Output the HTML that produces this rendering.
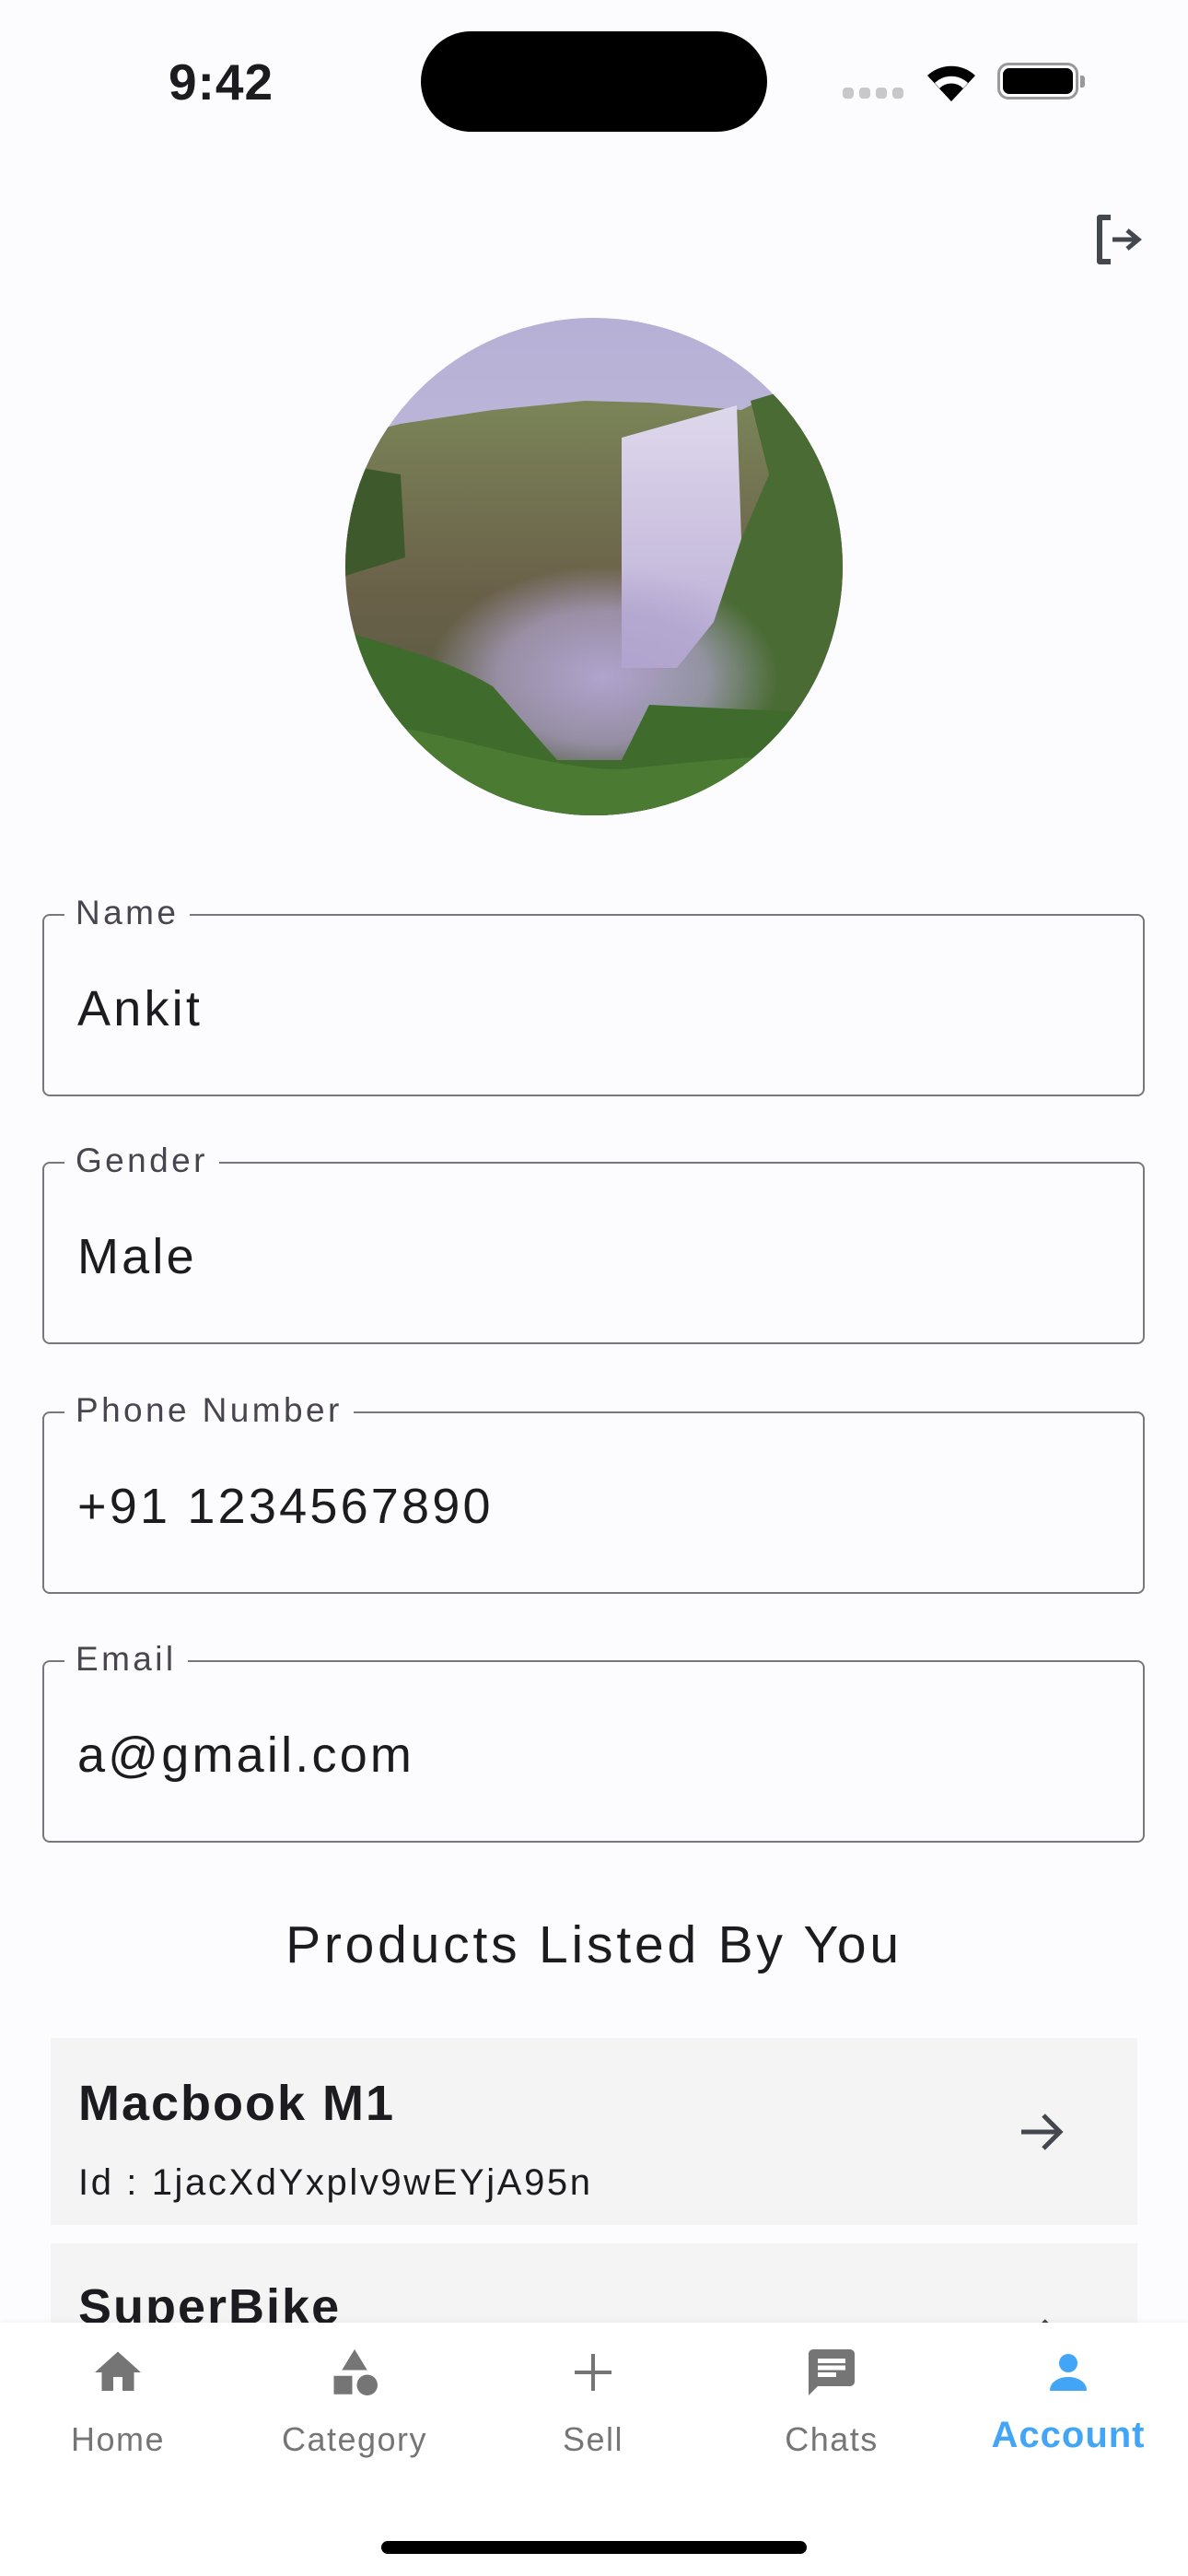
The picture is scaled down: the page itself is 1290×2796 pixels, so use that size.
<!DOCTYPE html>
<html><head><meta charset="utf-8"><style>
*{margin:0;padding:0;box-sizing:border-box}
body{width:1290px;height:2796px;background:#fcfcff;position:relative;overflow:hidden;font-family:"Liberation Sans",sans-serif;color:#1c1b1f}
.abs{position:absolute}
.field{position:absolute;left:46px;width:1197px;height:198px;border:2.5px solid #79767d;border-radius:8px}
.field .lab{position:absolute;left:22px;top:-25px;background:#fcfcff;padding:0 12px;font-size:37px;color:#49454f;letter-spacing:3.4px;line-height:44px}
.field .val{position:absolute;left:36px;top:70px;font-size:54px;letter-spacing:3.2px;line-height:62px}
.card{position:absolute;left:55px;width:1180px;background:#f4f4f4}
.card .t{position:absolute;left:30px;top:40px;font-size:54px;font-weight:bold;letter-spacing:2px}
.card .i{position:absolute;left:30px;top:135px;font-size:40px;letter-spacing:2.6px}
.nav{position:absolute;left:0;top:2521px;width:1290px;height:275px;background:#fff;box-shadow:0 -2px 6px rgba(0,0,0,.04)}
.ni{position:absolute;top:0;width:200px;height:200px}
.ni .l{position:absolute;left:0;top:106px;width:200px;text-align:center;font-size:36px;color:#757575;letter-spacing:1.5px}
.ni svg{position:absolute;top:24px;left:70px}
</style></head><body>
<div class="abs" style="left:183px;top:57px;font-size:55px;font-weight:bold;letter-spacing:1px">9:42</div>
<div class="abs" style="left:457px;top:34px;width:376px;height:109px;background:#000;border-radius:55px"></div>
<div class="abs" style="left:915px;top:95px;width:66px;height:12px">
<span class="abs" style="left:0;width:12px;height:12px;background:#c8c8c8;border-radius:4px"></span>
<span class="abs" style="left:18px;width:12px;height:12px;background:#c8c8c8;border-radius:4px"></span>
<span class="abs" style="left:36px;width:12px;height:12px;background:#c8c8c8;border-radius:4px"></span>
<span class="abs" style="left:54px;width:12px;height:12px;background:#c8c8c8;border-radius:4px"></span></div>
<svg class="abs" style="left:1003px;top:66px" width="60" height="44" viewBox="0 0 60 44"><path d="M30 44 L4 16 A38 38 0 0 1 56 16 Z" fill="#000"/><path d="M30 44 L12 24 A26 26 0 0 1 48 24Z" fill="#fcfcff"/><path d="M30 44 L17 30 A18 18 0 0 1 43 30Z" fill="#000"/></svg>
<div class="abs" style="left:1083px;top:68px;width:88px;height:40px;border:3px solid #999;border-radius:12px"></div>
<div class="abs" style="left:1089px;top:74px;width:76px;height:28px;background:#000;border-radius:7px"></div>
<div class="abs" style="left:1173px;top:82px;width:5px;height:13px;background:#999;border-radius:0 3px 3px 0"></div>
<svg class="abs" style="left:1186px;top:230px" width="60" height="60" viewBox="0 0 60 60"><path d="M20 6 H8 V54 H20" fill="none" stroke="#44474e" stroke-width="6" stroke-linejoin="round"/><path d="M22 30 H48 M38 20 L50 30 L38 40" fill="none" stroke="#44474e" stroke-width="5"/></svg>
<svg class="abs" style="left:375px;top:345px" width="540" height="540" viewBox="0 0 540 540">
<defs><clipPath id="c"><circle cx="270" cy="270" r="270"/></clipPath>
<linearGradient id="sky" x1="0" y1="0" x2="0" y2="1"><stop offset="0" stop-color="#b6b0d6"/><stop offset="1" stop-color="#c9c5e0"/></linearGradient>
<linearGradient id="cl" x1="0" y1="0" x2="0" y2="1"><stop offset="0" stop-color="#7d8a5a"/><stop offset=".5" stop-color="#6a6049"/><stop offset="1" stop-color="#4a5a3a"/></linearGradient>
<linearGradient id="wf" x1="0" y1="0" x2="0" y2="1"><stop offset="0" stop-color="#ded8ec"/><stop offset="1" stop-color="#b9acd4"/></linearGradient>
<radialGradient id="mist" cx=".5" cy=".5" r=".5"><stop offset="0" stop-color="#b0a3cd"/><stop offset=".6" stop-color="#b0a3cd" stop-opacity=".7"/><stop offset="1" stop-color="#b0a3cd" stop-opacity="0"/></radialGradient></defs>
<g clip-path="url(#c)">
<rect width="540" height="540" fill="url(#sky)"/>
<path d="M0 130 L60 115 L160 100 L260 90 L330 92 L430 100 L470 80 L540 60 V540 H0Z" fill="url(#cl)"/>
<path d="M0 160 L60 170 L65 260 L0 280Z" fill="#3e5a2c"/>
<path d="M440 90 L540 60 V540 H300 L320 420 L380 330 L430 240 L460 170Z" fill="#4a6b34"/>
<path d="M300 130 L425 95 L430 240 L400 330 L360 380 L300 380Z" fill="url(#wf)"/>
<ellipse cx="280" cy="390" rx="190" ry="120" fill="url(#mist)"/>
<path d="M0 340 C60 360 110 370 160 400 L230 480 L300 480 L330 420 L540 430 V540 H0Z" fill="#3f6b2c"/>
<path d="M0 440 C100 440 200 490 300 490 C400 480 480 470 540 480 V540 H0Z" fill="#4b7a33"/>
</g></svg>
<div class="field" style="top:992px"><span class="lab">Name</span><span class="val">Ankit</span></div>
<div class="field" style="top:1261px"><span class="lab">Gender</span><span class="val">Male</span></div>
<div class="field" style="top:1532px"><span class="lab">Phone Number</span><span class="val">+91 1234567890</span></div>
<div class="field" style="top:1802px"><span class="lab">Email</span><span class="val">a@gmail.com</span></div>
<div class="abs" style="left:0;width:1290px;top:2078px;text-align:center;font-size:57px;letter-spacing:3.8px">Products Listed By You</div>
<div class="card" style="top:2212px;height:203px"><span class="t">Macbook M1</span><span class="i">Id : 1jacXdYxplv9wEYjA95n</span>
<svg class="abs" style="left:1050px;top:76px" width="52" height="52" viewBox="0 0 52 52"><path d="M4 26 H46 M28 8 L46 26 L28 44" fill="none" stroke="#44474e" stroke-width="5"/></svg></div>
<div class="card" style="top:2435px;height:120px"><span class="t" style="top:38px">SuperBike</span>
<svg class="abs" style="left:1050px;top:76px" width="52" height="52" viewBox="0 0 52 52"><path d="M28 8 L46 26" fill="none" stroke="#44474e" stroke-width="5"/></svg></div>
<div class="nav">
<div class="ni" style="left:28px"><svg width="60" height="60" viewBox="0 0 24 24"><path d="M10 20v-6h4v6h5v-8h3L12 3 2 12h3v8z" fill="#757575"/></svg><span class="l">Home</span></div>
<div class="ni" style="left:285px"><svg width="60" height="60" viewBox="0 0 24 24"><path d="M12 2l-5.5 9h11z" fill="#757575"/><circle cx="17.5" cy="17.5" r="4.5" fill="#757575"/><path d="M3 13.5h8v8H3z" fill="#757575"/></svg><span class="l">Category</span></div>
<div class="ni" style="left:544px"><svg width="60" height="60" viewBox="0 0 24 24"><path d="M12 4v16M4 12h16" stroke="#757575" stroke-width="1.6"/></svg><span class="l">Sell</span></div>
<div class="ni" style="left:803px"><svg width="60" height="60" viewBox="0 0 24 24"><path d="M20 2H4c-1.1 0-2 .9-2 2v18l4-4h14c1.1 0 2-.9 2-2V4c0-1.1-.9-2-2-2zM6 9h12v2H6zm8 5H6v-2h8zm4-6H6V6h12z" fill="#757575"/></svg><span class="l">Chats</span></div>
<div class="ni" style="left:1060px"><svg width="60" height="60" viewBox="0 0 24 24"><circle cx="12" cy="8" r="4" fill="#42a5f5"/><path d="M4 20c0-4 4-6 8-6s8 2 8 6z" fill="#42a5f5"/></svg><span class="l" style="color:#42a5f5;font-weight:bold;font-size:40px;top:100px;letter-spacing:1px">Account</span></div>
</div>
<div class="abs" style="left:414px;top:2758px;width:462px;height:14px;background:#000;border-radius:7px"></div>
</body></html>
